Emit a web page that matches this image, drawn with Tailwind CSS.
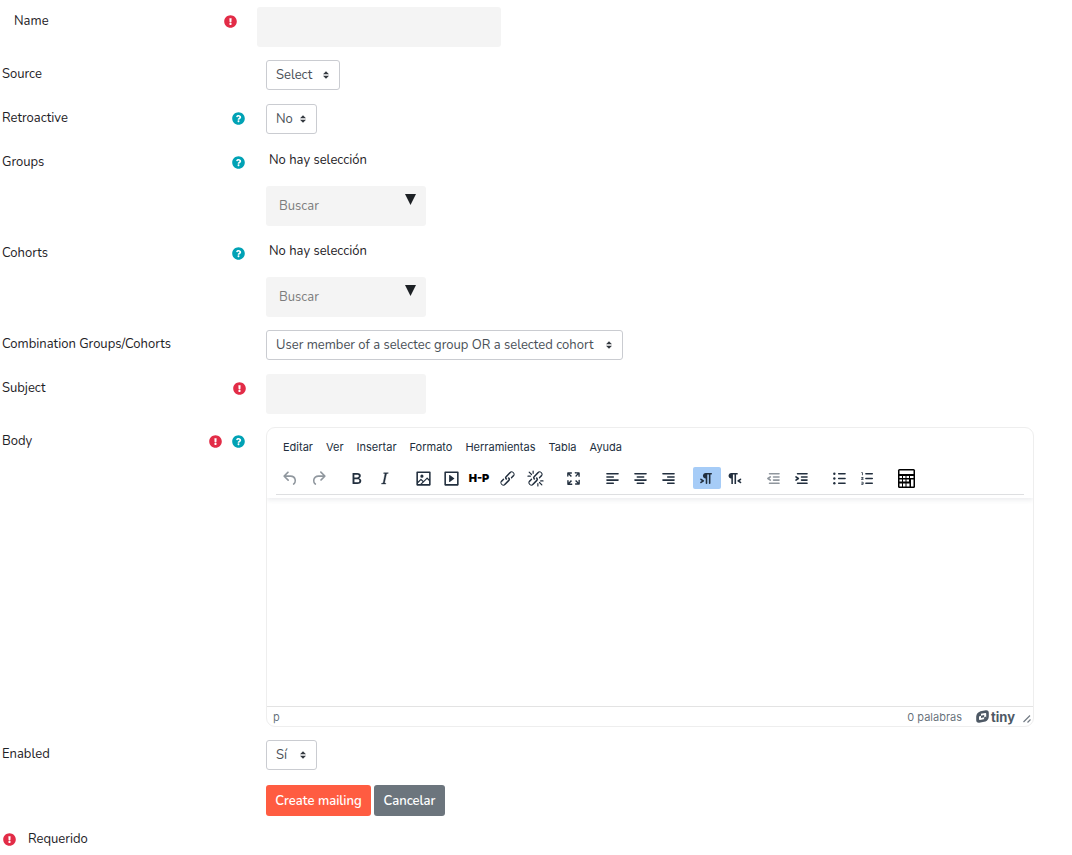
<!DOCTYPE html>
<html lang="es">
<head>
<meta charset="utf-8">
<meta name="viewport" content="width=device-width, initial-scale=1">
<title>Create mailing</title>
<script src="https://cdn.jsdelivr.net/npm/@tailwindcss/browser@4"></script>
</head>
<body class="bg-white font-[Nunito,Lato,sans-serif] text-[13px] leading-5 text-[#1d2125]">

<svg class="hidden" aria-hidden="true">
  <symbol id="required" viewBox="0 0 512 512"><path d="M504 256c0 136.997-111.043 248-248 248S8 392.997 8 256C8 119.083 119.043 8 256 8s248 111.083 248 248zm-248 50c-25.405 0-46 20.595-46 46s20.595 46 46 46 46-20.595 46-46-20.595-46-46-46zm-43.673-165.346l7.418 136c.347 6.364 5.609 11.346 11.982 11.346h48.546c6.373 0 11.635-4.982 11.982-11.346l7.418-136c.375-6.874-5.098-12.654-11.982-12.654h-63.383c-6.884 0-12.356 5.78-11.981 12.654z"/></symbol>
  <symbol id="help" viewBox="0 0 512 512"><path d="M504 256c0 136.997-111.043 248-248 248S8 392.997 8 256C8 119.083 119.043 8 256 8s248 111.083 248 248zM262.655 120c-44 0-76 19-98 53-3.536 5.286-2.353 12.415 2.715 16.258l27 20.500c5.205 3.947 12.621 3.008 16.665-2.122 14-18 25-28 48-28 17 0 36 10 36 26 0 12-10 18-26 27-19 11-44 25-44 58v4c0 6.627 5.373 12 12 12h44c6.627 0 12-5.373 12-12 0-22 68-25 68-89 0-48-50-85.600-98.400-85.600zM256 326c-21 0-38 17-38 38s17 38 38 38 38-17 38-38-17-38-38-38z"/></symbol>
  <symbol id="caret" viewBox="0 0 4 5"><path d="M2 0 0 2h4zm0 5L0 3h4z"/></symbol>
</svg>

<form class="flex flex-col gap-[13px] pt-[7px]">

  <div class="flex items-start">
    <div class="flex w-[257px] shrink-0 items-center justify-between pt-1 pr-5 pl-3.5">
      <label for="name">Name</label>
      <svg class="size-[13px] fill-[#e22c47]" role="img" aria-label="Requerido"><use href="#required"/></svg>
    </div>
    <input id="name" type="text" class="h-10 w-[244px] rounded-[3px] bg-[#f4f4f4] px-3">
  </div>

  <div class="flex min-h-[31px] items-start">
    <div class="w-[266px] shrink-0 pt-1 pl-0.5"><label for="source">Source</label></div>
    <div class="relative">
      <select id="source" class="h-[30px] w-[74px] appearance-none rounded-[3px] border border-[#caccd1] bg-white pl-[9px] text-[#495057]"><option>Select</option></select>
      <svg class="pointer-events-none absolute top-[11px] right-[11px] h-2 w-1.5 fill-[#343a40]"><use href="#caret"/></svg>
    </div>
  </div>

  <div class="flex min-h-[31px] items-start">
    <div class="flex w-[266px] shrink-0 items-center justify-between pt-1 pr-[21px] pl-0.5">
      <label for="retroactive">Retroactive</label>
      <button type="button" aria-label="Ayuda con Retroactive"><svg class="size-[13px] fill-[#00a2b5]"><use href="#help"/></svg></button>
    </div>
    <div class="relative">
      <select id="retroactive" class="h-[30px] w-[51px] appearance-none rounded-[3px] border border-[#caccd1] bg-white pl-[9px] text-[#495057]"><option>No</option></select>
      <svg class="pointer-events-none absolute top-[11px] right-[11px] h-2 w-1.5 fill-[#343a40]"><use href="#caret"/></svg>
    </div>
  </div>

  <div class="flex items-start">
    <div class="flex w-[266px] shrink-0 items-center justify-between pt-1 pr-[21px] pl-0.5">
      <label for="groups">Groups</label>
      <button type="button" aria-label="Ayuda con Groups"><svg class="size-[13px] fill-[#00a2b5]"><use href="#help"/></svg></button>
    </div>
    <div class="pt-0.5">
      <p class="mb-4 pl-[3px]">No hay selección</p>
      <div class="relative w-40">
        <input id="groups" type="text" placeholder="Buscar" class="block h-10 w-full rounded-[3px] bg-[#f4f4f4] pr-8 pl-[13px] placeholder:text-[#7c7c7c]">
        <svg class="pointer-events-none absolute top-2 right-2.5 h-[11px] w-[11px] fill-[#1d2125]" viewBox="0 0 11 11"><path d="M0 0h11L5.500 11z"/></svg>
      </div>
    </div>
  </div>

  <div class="flex items-start">
    <div class="flex w-[266px] shrink-0 items-center justify-between pt-1 pr-[21px] pl-0.5">
      <label for="cohorts">Cohorts</label>
      <button type="button" aria-label="Ayuda con Cohorts"><svg class="size-[13px] fill-[#00a2b5]"><use href="#help"/></svg></button>
    </div>
    <div class="pt-0.5">
      <p class="mb-4 pl-[3px]">No hay selección</p>
      <div class="relative w-40">
        <input id="cohorts" type="text" placeholder="Buscar" class="block h-10 w-full rounded-[3px] bg-[#f4f4f4] pr-8 pl-[13px] placeholder:text-[#7c7c7c]">
        <svg class="pointer-events-none absolute top-2 right-2.5 h-[11px] w-[11px] fill-[#1d2125]" viewBox="0 0 11 11"><path d="M0 0h11L5.500 11z"/></svg>
      </div>
    </div>
  </div>

  <div class="flex min-h-[31px] items-start">
    <div class="w-[266px] shrink-0 pt-1 pl-0.5"><label for="combination">Combination Groups/Cohorts</label></div>
    <div class="relative">
      <select id="combination" class="h-[30px] w-[357px] appearance-none rounded-[3px] border border-[#caccd1] bg-white pl-[9px] text-[#495057]"><option>User member of a selectec group OR a selected cohort</option></select>
      <svg class="pointer-events-none absolute top-[11px] right-[11px] h-2 w-1.5 fill-[#343a40]"><use href="#caret"/></svg>
    </div>
  </div>

  <div class="flex items-start">
    <div class="flex w-[266px] shrink-0 items-center justify-between pt-1 pr-5 pl-0.5">
      <label for="subject">Subject</label>
      <svg class="size-[13px] fill-[#e22c47]" role="img" aria-label="Requerido"><use href="#required"/></svg>
    </div>
    <input id="subject" type="text" class="h-10 w-40 rounded-[3px] bg-[#f4f4f4] px-3">
  </div>

  <div class="flex items-start">
    <div class="flex w-[266px] shrink-0 items-center pt-1 pr-[21px] pl-0.5">
      <label for="body" class="grow">Body</label>
      <svg class="mr-2.5 size-[13px] fill-[#e22c47]" role="img" aria-label="Requerido"><use href="#required"/></svg>
      <button type="button" aria-label="Ayuda con Body"><svg class="size-[13px] fill-[#00a2b5]"><use href="#help"/></svg></button>
    </div>

    <!-- Rich text editor -->
    <div class="mr-[38px] flex min-w-0 grow flex-col overflow-hidden rounded-[9px] border border-[#eeeeee] font-[Inter,sans-serif] text-[11px] text-[#222f3e]">
      <div class="z-10 px-[9px] pb-[3px] shadow-[0_2px_5px_rgba(34,47,62,0.09)]">
        <div class="flex gap-[13px] px-[7px] pt-[9px] pb-2.5">
          <button type="button">Editar</button><button type="button">Ver</button><button type="button">Insertar</button><button type="button">Formato</button><button type="button">Herramientas</button><button type="button">Tabla</button><button type="button">Ayuda</button>
        </div>
        <div class="border-b border-[#dedfe1] pb-[5px]">
          <div class="flex max-w-[644px] justify-between fill-[#222f3e] [&_button]:flex [&_button]:h-[22px] [&_button]:w-7 [&_button]:items-center [&_button]:justify-center [&_svg]:size-[19px]">
            <div class="flex fill-[#222f3e]/50">
              <button type="button" aria-label="Deshacer"><svg viewBox="0 0 24 24"><path d="M6.400 8H12c3.700 0 6.200 2 6.800 5.100.6 2.700-.4 5.600-2.300 6.800a1 1 0 0 1-1-1.800c1.100-.6 1.800-2.700 1.400-4.600-.5-2.100-2.100-3.500-4.900-3.500H6.400l3.300 3.300a1 1 0 1 1-1.400 1.400l-5-5a1 1 0 0 1 0-1.400l5-5a1 1 0 0 1 1.400 1.400L6.400 8Z"/></svg></button>
              <button type="button" aria-label="Rehacer"><svg viewBox="0 0 24 24"><path d="M17.600 10H12c-2.800 0-4.400 1.400-4.900 3.500-.4 2 .3 4 1.400 4.600a1 1 0 1 1-1 1.800c-2-1.200-2.900-4.100-2.300-6.800.6-3 3-5.100 6.800-5.100h5.600l-3.300-3.300a1 1 0 1 1 1.400-1.400l5 5a1 1 0 0 1 0 1.400l-5 5a1 1 0 0 1-1.400-1.400l3.300-3.300Z"/></svg></button>
            </div>
            <div class="flex">
              <button type="button" aria-label="Negrita"><svg viewBox="0 0 24 24"><path d="M7.800 19c-.3 0-.5 0-.6-.2l-.2-.5V5.700c0-.2 0-.4.2-.5l.6-.2h5c1.500 0 2.700.3 3.500 1 .7.6 1.100 1.400 1.100 2.500a3 3 0 0 1-.6 1.900c-.4.6-1 1-1.600 1.200.4.1.9.3 1.300.6s.8.7 1 1.200c.4.4.5 1 .5 1.600 0 1.300-.4 2.300-1.300 3-.8.7-2.100 1-3.800 1H7.800Zm5-8.300c.6 0 1.200-.1 1.600-.5.4-.3.6-.7.6-1.300 0-1.100-.8-1.700-2.300-1.700H9.300v3.500h3.400Zm.5 6c.7 0 1.300-.1 1.700-.4.4-.4.6-.9.6-1.500s-.2-1-.7-1.400c-.4-.3-1-.4-2-.4H9.400v3.800h4Z" fill-rule="evenodd"/></svg></button>
              <button type="button" aria-label="Cursiva"><svg viewBox="0 0 24 24"><path d="m16.700 4.700-.1.900h-.3c-.6 0-1 0-1.400.3-.3.3-.4.6-.5 1.100l-2.100 9.800v.6c0 .5.4.8 1.400.8h.2l-.2.8H8l.2-.8h.2c1.100 0 1.800-.5 2-1.500l2-9.800.1-.5c0-.6-.4-.8-1.400-.8h-.3l.2-.9h5.800Z" stroke="#222f3e" stroke-width=".4"/></svg></button>
            </div>
            <div class="flex">
              <button type="button" aria-label="Imagen"><svg viewBox="0 0 24 24"><path d="m5 15.700 3.300-3.200c.3-.3.7-.3 1 0L12 15l4.100-4c.3-.4.8-.4 1 0l2 1.900V5H5v10.700ZM5 18V19h3l2.800-2.900-2-2L5 17.900Zm14-3-2.500-2.400-6.400 6.500H19v-4ZM4 3h16c.6 0 1 .4 1 1v16c0 .6-.4 1-1 1H4a1 1 0 0 1-1-1V4c0-.6.4-1 1-1Zm6 8a2 2 0 1 0 0-4 2 2 0 0 0 0 4Z" fill-rule="evenodd"/></svg></button>
              <button type="button" aria-label="Multimedia"><svg viewBox="0 0 24 24"><path d="M4 3h16c.6 0 1 .4 1 1v16c0 .6-.4 1-1 1H4a1 1 0 0 1-1-1V4c0-.6.4-1 1-1Zm1 2v14h14V5H5Zm4.800 2.600 5.600 4a.5.5 0 0 1 0 .8l-5.600 4A.5.5 0 0 1 9 16V8a.5.5 0 0 1 .8-.4Z" fill-rule="evenodd"/></svg></button>
              <button type="button" class="text-[11px] font-black text-black">H-P</button>
              <button type="button" aria-label="Enlace"><svg viewBox="0 0 24 24"><path d="M6.200 12.300a1 1 0 0 1 1.400 1.400l-2 2a2 2 0 1 0 2.600 2.800l4.800-4.800a1 1 0 0 0 0-1.400 1 1 0 1 1 1.400-1.300 2.900 2.900 0 0 1 0 4L9.600 20a3.900 3.900 0 0 1-5.500-5.500l2-2Zm11.600-.6a1 1 0 0 1-1.400-1.400l2-2a2 2 0 1 0-2.600-2.800L11 10.300a1 1 0 0 0 0 1.400A1 1 0 1 1 9.600 13a2.900 2.900 0 0 1 0-4L14.400 4a3.900 3.900 0 0 1 5.500 5.500l-2 2Z"/></svg></button>
              <button type="button" aria-label="Quitar enlace"><svg viewBox="0 0 24 24"><path d="M6.200 12.300a1 1 0 0 1 1.400 1.400l-2 2a2 2 0 1 0 2.600 2.800l4.800-4.800a1 1 0 0 0 0-1.400 1 1 0 1 1 1.400-1.300 2.900 2.900 0 0 1 0 4L9.600 20a3.900 3.900 0 0 1-5.500-5.500l2-2Zm11.600-.6a1 1 0 0 1-1.400-1.400l2-2a2 2 0 1 0-2.600-2.800L11 10.300a1 1 0 0 0 0 1.400A1 1 0 1 1 9.600 13a2.900 2.900 0 0 1 0-4L14.400 4a3.900 3.900 0 0 1 5.500 5.500l-2 2Z"/><path d="m4 4 3 3M2.500 9h3M9 2.500v3M20 20l-3-3m4.500-2h-3M15 21.500v-3" fill="none" stroke="#222f3e" stroke-width="1.500" stroke-linecap="round"/></svg></button>
            </div>
            <div class="flex">
              <button type="button" aria-label="Pantalla completa"><svg viewBox="0 0 24 24"><path d="m15.300 10-1.200-1.300 2.900-3h-2.300a.9.9 0 1 1 0-1.700H19c.5 0 .9.4.9.9v4.400a.9.9 0 1 1-1.800 0V7l-2.900 3Zm0 4 3 3v-2.300a.9.9 0 1 1 1.700 0V19c0 .5-.4.9-.9.9h-4.400a.9.9 0 1 1 0-1.800H17l-3-2.900 1.300-1.200ZM10 15.400l-2.900 3h2.300a.9.9 0 1 1 0 1.700H5a.9.9 0 0 1-.9-.9v-4.400a.9.9 0 1 1 1.800 0V17l2.900-3 1.200 1.300ZM8.700 10 5.700 7v2.300a.9.9 0 0 1-1.700 0V5c0-.5.4-.9.900-.9h4.400a.9.9 0 0 1 0 1.800H7l3 2.900-1.300 1.200Z"/></svg></button>
            </div>
            <div class="flex">
              <button type="button" aria-label="Alinear a la izquierda"><svg viewBox="0 0 24 24"><path d="M5 6h14M5 10h8M5 14h14M5 18h8" stroke="#222f3e" stroke-width="2" stroke-linecap="round"/></svg></button>
              <button type="button" aria-label="Centrar"><svg viewBox="0 0 24 24"><path d="M5 6h14M8 10h8M5 14h14M8 18h8" stroke="#222f3e" stroke-width="2" stroke-linecap="round"/></svg></button>
              <button type="button" aria-label="Alinear a la derecha"><svg viewBox="0 0 24 24"><path d="M5 6h14M11 10h8M5 14h14M11 18h8" stroke="#222f3e" stroke-width="2" stroke-linecap="round"/></svg></button>
            </div>
            <div class="flex">
              <button type="button" aria-pressed="true" aria-label="De izquierda a derecha" class="rounded-xs bg-[#a6ccf7]"><svg viewBox="0 0 24 24"><path d="M11 5h7a1 1 0 0 1 0 2h-1v11a1 1 0 0 1-2 0V7h-2v11a1 1 0 0 1-2 0v-6c-.5 0-1 0-1.400-.3A3.400 3.400 0 0 1 7.800 10a3.300 3.300 0 0 1 0-2.800 3.400 3.400 0 0 1 1.800-1.800L11 5ZM4.400 16.200 6.200 15l-1.800-1.200a1 1 0 0 1 1.200-1.600l3 2a1 1 0 0 1 0 1.600l-3 2a1 1 0 1 1-1.200-1.600Z"/></svg></button>
              <button type="button" aria-label="De derecha a izquierda"><svg viewBox="0 0 24 24"><path d="M8 5h8v2h-2v12h-2V7h-2v12H8v-7c-.5 0-1 0-1.400-.3A3.400 3.400 0 0 1 4.800 10a3.300 3.300 0 0 1 0-2.800 3.400 3.400 0 0 1 1.800-1.800L8 5Zm12.200 11.200a1 1 0 1 1-1.200 1.600l-3-2a1 1 0 0 1 0-1.600l3-2a1 1 0 1 1 1.200 1.600L18.400 15l1.800 1.200Z"/></svg></button>
            </div>
            <div class="flex">
              <button type="button" aria-label="Disminuir sangría" class="opacity-50"><svg viewBox="0 0 24 24"><path d="M7 5h12c.6 0 1 .4 1 1s-.4 1-1 1H7a1 1 0 1 1 0-2Zm5 4h7c.6 0 1 .4 1 1s-.4 1-1 1h-7a1 1 0 0 1 0-2Zm0 4h7c.6 0 1 .4 1 1s-.4 1-1 1h-7a1 1 0 0 1 0-2Zm-5 4h12a1 1 0 0 1 0 2H7a1 1 0 0 1 0-2Zm1.600-3.800a1 1 0 0 1-1.200 1.600l-3-2a1 1 0 0 1 0-1.600l3-2a1 1 0 0 1 1.200 1.600L6.800 12l1.800 1.200Z"/></svg></button>
              <button type="button" aria-label="Aumentar sangría"><svg viewBox="0 0 24 24"><path d="M7 5h12c.6 0 1 .4 1 1s-.4 1-1 1H7a1 1 0 1 1 0-2Zm5 4h7c.6 0 1 .4 1 1s-.4 1-1 1h-7a1 1 0 0 1 0-2Zm0 4h7c.6 0 1 .4 1 1s-.4 1-1 1h-7a1 1 0 0 1 0-2Zm-5 4h12a1 1 0 0 1 0 2H7a1 1 0 0 1 0-2Zm-2.600-3.800L6.200 12l-1.800-1.200a1 1 0 0 1 1.200-1.600l3 2a1 1 0 0 1 0 1.600l-3 2a1 1 0 1 1-1.200-1.600Z"/></svg></button>
            </div>
            <div class="flex">
              <button type="button" aria-label="Lista de viñetas"><svg viewBox="0 0 24 24"><path d="M11 6h8M11 12h8M11 18h8" stroke="#222f3e" stroke-width="2" stroke-linecap="round"/><circle cx="5.500" cy="6" r="1.500"/><circle cx="5.500" cy="12" r="1.500"/><circle cx="5.500" cy="18" r="1.500"/></svg></button>
              <button type="button" aria-label="Lista numerada"><svg viewBox="0 0 24 24"><path d="M10 17h8c.6 0 1 .4 1 1s-.4 1-1 1h-8a1 1 0 0 1 0-2Zm0-6h8c.6 0 1 .4 1 1s-.4 1-1 1h-8a1 1 0 0 1 0-2Zm0-6h8c.6 0 1 .4 1 1s-.4 1-1 1h-8a1 1 0 1 1 0-2ZM6 4v3.500c0 .3-.2.5-.5.5a.5.5 0 0 1-.5-.5V5h-.5a.5.5 0 0 1 0-1H6Zm-1 8.800.2.2h1.300c.3 0 .5.2.5.5s-.2.5-.5.5H4.900a1 1 0 0 1-.9-1V13c0-.4.3-.8.6-1l1.200-.4.2-.3a.2.2 0 0 0-.2-.2H4.500a.5.5 0 0 1-.5-.5c0-.3.2-.5.5-.5h1.600c.5 0 .9.4.9 1v.1c0 .4-.3.8-.6 1l-1.200.4-.2.3ZM7 17v2c0 .6-.4 1-1 1H4.500a.5.5 0 0 1 0-1h1.200c.2 0 .3-.1.3-.3 0-.2-.1-.3-.3-.3H4.400a.4.4 0 1 1 0-.8h1.300c.2 0 .3-.1.3-.3 0-.2-.1-.3-.3-.3H4.500a.5.5 0 1 1 0-1H6c.6 0 1 .4 1 1Z"/></svg></button>
            </div>
            <div class="flex">
              <button type="button" aria-label="Calculadora"><svg viewBox="0 0 19 19"><rect x="1" y="0" width="17" height="19" rx="1.500" fill="#000"/><path d="M2.500 1.500h14v3.500h-14zM2.500 7h2.500v2h-2.500zm3.500 0h2.500v2H6zm3.500 0H12v2H9.500zm3.500 0h3.500v2H13zM2.500 10.500H5v2H2.500zm3.500 0h2.500v2H6zm3.500 0H12v2H9.500zm4.500 0h2.500v7H14zM2.500 14.500H5v3H2.500zm3.500 0h2.500v3H6zm3.500 0h3v3h-3z" fill="#fff"/></svg></button>
            </div>
          </div>
        </div>
      </div>
      <textarea id="body" class="block h-[208px] w-full resize-none p-3 text-[13px] outline-none"></textarea>
      <div class="flex h-5 items-center border-t border-[#e3e3e3] pr-0.5 pl-1.5 text-[#222f3e]/70">
        <span class="grow">p</span>
        <span class="mr-3.5">0 palabras</span>
        <a href="#" aria-label="Tiny" class="mr-2 flex items-center gap-0.5 text-[13px] font-bold text-[#4e5965]">
          <svg class="size-[13px]" viewBox="0 0 13 13"><path d="M4.500 1.200 9.800.2Q13 0 12.800 3.200V6.500Q12.600 10 9.500 11.500L3.200 12.800Q0 13 .2 9.800V6.500Q.5 2.800 4.500 1.200Z" fill="#4e5965"/><path d="M4.800 3.800 9.300 3Q10.300 2.900 10.200 4v3.500Q10 8.700 8.700 9L4 9.900Q2.900 10 3 8.900V6Q3.100 4.200 4.800 3.800Z" fill="#fff"/><path d="M5 5.800 8.200 5v2.300L5 8z" fill="#4e5965"/><path d="M2.500 4.500 5 3.200v2.600L3 6.500zM8.200 7.300l2-.8v2L8 9.800z" fill="#4e5965"/></svg>
          <span>tiny</span>
        </a>
        <svg class="mt-1 size-2" viewBox="0 0 8 8"><path d="M.500 7 7 .500M4.500 7.500 7.500 4.500" fill="none" stroke="#737b85" stroke-width="1.200"/></svg>
      </div>
    </div>
  </div>

  <div class="flex min-h-[31px] items-start">
    <div class="w-[266px] shrink-0 pt-1 pl-0.5"><label for="enabled">Enabled</label></div>
    <div class="relative">
      <select id="enabled" class="h-[30px] w-[51px] appearance-none rounded-[3px] border border-[#caccd1] bg-white pl-[9px] text-[#495057]"><option>Sí</option></select>
      <svg class="pointer-events-none absolute top-[11px] right-[11px] h-2 w-1.5 fill-[#343a40]"><use href="#caret"/></svg>
    </div>
  </div>

  <div class="flex gap-[3px] pt-px pl-[266px] font-semibold text-white">
    <button type="submit" class="h-[31px] w-[105px] rounded-[3px] bg-[#ff5c41]">Create mailing</button>
    <button type="button" class="h-[31px] w-[71px] rounded-[3px] bg-[#6c757d]">Cancelar</button>
  </div>

  <div class="flex items-center gap-3 pl-[3px]">
    <svg class="size-[13px] fill-[#e22c47]" aria-hidden="true"><use href="#required"/></svg>
    <span>Requerido</span>
  </div>
</form>
</body>
</html>
